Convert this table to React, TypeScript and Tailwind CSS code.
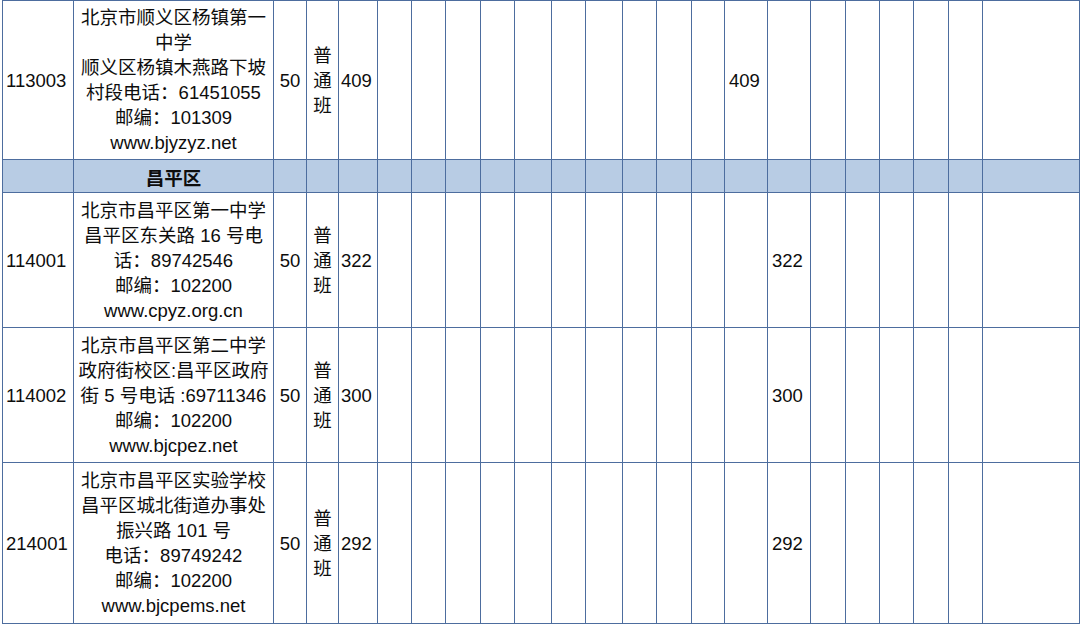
import React from "react";

type School = {
  code: string;
  lines: string[];
  plan: string;
  score: string;
  scoreCol: number;
  height: string;
};

const schools: School[] = [
  {
    code: "113003",
    lines: ["北京市顺义区杨镇第一", "中学", "顺义区杨镇木燕路下坡", "村段电话：61451055", "邮编：101309", "www.bjyzyz.net"],
    plan: "50",
    score: "409",
    scoreCol: 15,
    height: "h-[159px]",
  },
  {
    code: "114001",
    lines: ["北京市昌平区第一中学", "昌平区东关路 16 号电", "话：89742546", "邮编：102200", "www.cpyz.org.cn"],
    plan: "50",
    score: "322",
    scoreCol: 16,
    height: "h-[135px]",
  },
  {
    code: "114002",
    lines: ["北京市昌平区第二中学", "政府街校区:昌平区政府", "街 5 号电话 :69711346", "邮编：102200", "www.bjcpez.net"],
    plan: "50",
    score: "300",
    scoreCol: 16,
    height: "h-[135px]",
  },
  {
    code: "214001",
    lines: ["北京市昌平区实验学校", "昌平区城北街道办事处", "振兴路 101 号", "电话：89749242", "邮编：102200", "www.bjcpems.net"],
    plan: "50",
    score: "292",
    scoreCol: 16,
    height: "h-[161px]",
  },
];

// 23 columns, widths read off the sheet
const grid =
  "grid grid-cols-[71px_200px_33px_32px_39px_34px_34px_35px_34px_37px_34px_37px_34px_35px_33px_43px_43px_35px_34px_34px_35px_34px_97px]";

const cell = "border-r border-b border-[#4d6d9e] flex items-center";
const EMPTY = Array.from({ length: 23 }, (_, i) => i);

const SchoolRow: React.FC<{ s: School }> = ({ s }) => (
  <div className={`${grid} ${s.height}`}>
    {EMPTY.map((i) => {
      if (i === 0) return <div key={i} className={`${cell} pl-[3px]`}>{s.code}</div>;
      if (i === 1)
        return (
          <div key={i} className={`${cell} flex-col justify-center text-center`}>
            {s.lines.map((l) => (
              <div key={l} className="whitespace-nowrap">{l}</div>
            ))}
          </div>
        );
      if (i === 2) return <div key={i} className={`${cell} justify-center`}>{s.plan}</div>;
      if (i === 3)
        return (
          <div key={i} className={`${cell} flex-col justify-center`}>
            <div>普</div>
            <div>通</div>
            <div>班</div>
          </div>
        );
      if (i === 4) return <div key={i} className={`${cell} pl-[2px]`}>{s.score}</div>;
      if (i === s.scoreCol) return <div key={i} className={`${cell} pl-[4px]`}>{s.score}</div>;
      return <div key={i} className={cell} />;
    })}
  </div>
);

export default function App() {
  const [first, ...rest] = schools;
  return (
    <div className="w-[1080px] h-[624px] overflow-hidden bg-white">
      <div
        className="ml-[2px] w-[1078px] border-l border-t border-[#4d6d9e] text-[18.5px] leading-[25px] text-[#0d0d0d]"
        style={{ fontFamily: '"Liberation Sans", "Noto Sans CJK SC", sans-serif' }}
      >
        <SchoolRow s={first} />
        <div className={`${grid} h-[33px] bg-[#b8cce4]`}>
          {EMPTY.map((i) => (
            <div key={i} className={`${cell} justify-center ${i === 1 ? "font-bold pt-[4px]" : ""}`}>
              {i === 1 ? "昌平区" : ""}
            </div>
          ))}
        </div>
        {rest.map((s) => (
          <SchoolRow key={s.code} s={s} />
        ))}
      </div>
    </div>
  );
}
